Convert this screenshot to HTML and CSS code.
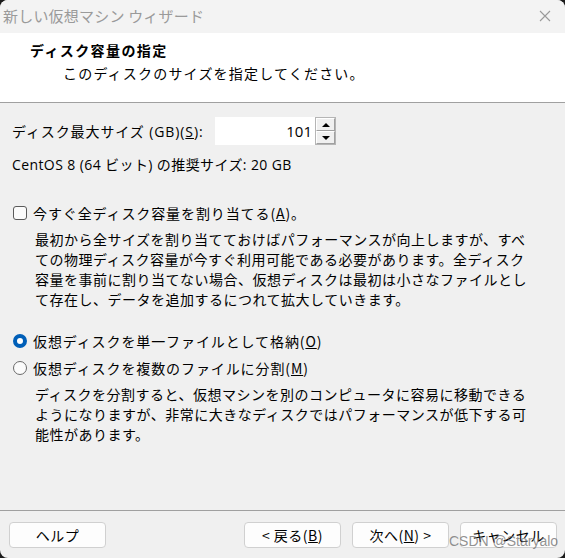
FILE: index.html
```html
<!DOCTYPE html>
<html lang="ja">
<head>
  <meta charset="UTF-8" />
  <title>新しい仮想マシン ウィザード</title>
  <link rel="stylesheet" href="styles.css">
</head>
<body>
  <div class="window">
    <div class="titlebar">
      <span class="title">新しい仮想マシン ウィザード</span>
      <svg class="close" width="12" height="12" viewBox="0 0 12 12">
        <path d="M1 1 L11 11 M11 1 L1 11" stroke="#9a9a9a" stroke-width="1.1" fill="none"/>
      </svg>
    </div>

    <div class="header">
      <h2>ディスク容量の指定</h2>
      <p>このディスクのサイズを指定してください。</p>
    </div>

    <div class="content">
      <div class="size-row">
        <label for="size">ディスク最大サイズ (GB)(<u>S</u>):</label>
        <div class="spin">
          <input type="text" id="size" value="101">
          <div class="spin-btns">
            <span class="up"></span>
            <span class="down"></span>
          </div>
        </div>
      </div>
      <div class="recommend">CentOS 8 (64 ビット) の推奨サイズ: 20 GB</div>

      <div class="option check-opt">
        <span class="checkbox"></span>
        <span>今すぐ全ディスク容量を割り当てる(<u>A</u>)。</span>
      </div>
      <p class="desc">最初から全サイズを割り当てておけばパフォーマンスが向上しますが、すべ<br>ての物理ディスク容量が今すぐ利用可能である必要があります。全ディスク<br>容量を事前に割り当てない場合、仮想ディスクは最初は小さなファイルとし<br>て存在し、データを追加するにつれて拡大していきます。</p>

      <div class="option radio-first">
        <span class="radio checked"></span>
        <span>仮想ディスクを単一ファイルとして格納(<u>O</u>)</span>
      </div>
      <div class="option radio-second">
        <span class="radio"></span>
        <span>仮想ディスクを複数のファイルに分割(<u>M</u>)</span>
      </div>
      <p class="desc">ディスクを分割すると、仮想マシンを別のコンピュータに容易に移動できる<br>ようになりますが、非常に大きなディスクではパフォーマンスが低下する可<br>能性があります。</p>
    </div>

    <div class="footer">
      <button>ヘルプ</button>
      <div class="nav">
        <button>&lt; 戻る(<u>B</u>)</button>
        <button>次へ(<u>N</u>) &gt;</button>
        <button>キャンセル</button>
      </div>
      <span class="watermark">CSDN @Staryalo</span>
    </div>
  </div>
</body>
</html>
```

FILE: styles.css
```css
html {
  background: #1c1c1c;
}
body {
  margin: 0;
  font-family: "Open Sans", "Noto Sans CJK JP", sans-serif;
  font-size: 14px;
  letter-spacing: 0.4px;
  color: #000;
}
.window {
  width: 565px;
  height: 558px;
  background: #f0f0f0;
  border-radius: 8px;
  overflow: hidden;
  display: flex;
  flex-direction: column;
}
.titlebar {
  height: 33px;
  background: #f3f3f3;
  display: flex;
  align-items: center;
  justify-content: space-between;
  padding: 0 14px 0 3px;
}
.title {
  font-family: "Noto Sans CJK JP", sans-serif;
  font-size: 15px;
  letter-spacing: 0.2px;
  color: #9a9a9a;
  line-height: 20px;
  margin-top: -2px;
}
.close {
  margin-top: -2px;
}
.header {
  background: #fff;
  height: 70px;
  box-sizing: border-box;
  padding: 7px 0 0 30px;
  border-bottom: 1px solid #a0a0a0;
  font-family: "Noto Sans CJK JP", sans-serif;
}
.header h2 {
  margin: 0;
  font-size: 14px;
  line-height: 20px;
  font-weight: bold;
  letter-spacing: 1.4px;
}
.header p {
  margin: 3px 0 0 33px;
  font-size: 14px;
  line-height: 20px;
  letter-spacing: 1.2px;
}
.content {
  flex: 1;
  padding: 14px 0 0 12px;
}
.size-row {
  display: flex;
  align-items: center;
  gap: 6px;
  height: 28px;
}
.size-row label {
  width: 197px;
  white-space: nowrap;
  letter-spacing: 0.9px;
}
.spin {
  display: flex;
  height: 28px;
}
.spin input {
  width: 100px;
  height: 28px;
  box-sizing: border-box;
  border: none;
  background: #fff;
  text-align: right;
  padding: 0 3px 0 0;
  font-family: "Open Sans", sans-serif;
  font-size: 15px;
  color: #000;
}
.spin-btns {
  display: flex;
  flex-direction: column;
  width: 19px;
  border: 1px solid #b5b5b5;
  background: #fff;
}
.spin-btns span {
  flex: 1;
  position: relative;
  background: #f0f0f0;
  border: 1px solid #fff;
  border-right-color: #a0a0a0;
  border-bottom-color: #a0a0a0;
}
.spin-btns span::after {
  content: "";
  position: absolute;
  left: 5px;
  top: 4px;
  border-left: 4px solid transparent;
  border-right: 4px solid transparent;
}
.spin-btns .up::after {
  border-bottom: 4px solid #000;
}
.spin-btns .down::after {
  border-top: 4px solid #000;
}
.recommend {
  margin-top: 10px;
  line-height: 20px;
}
.option {
  display: flex;
  align-items: center;
  gap: 6px;
  line-height: 20px;
  font-family: "Noto Sans CJK JP", sans-serif;
  letter-spacing: 0.9px;
}
.check-opt {
  margin-top: 28px;
}
.checkbox {
  width: 12px;
  height: 12px;
  border: 1px solid #5a5a5a;
  border-radius: 3px;
  background: #fbfbfb;
  margin-left: 1px;
}
.radio {
  width: 12px;
  height: 12px;
  border: 1px solid #6a6a6a;
  border-radius: 50%;
  background: #fbfbfb;
  margin-left: 1px;
}
.radio.checked {
  width: 6px;
  height: 6px;
  border: 4px solid #005fb8;
  background: #fff;
}
.desc {
  margin: 6px 0 0 23px;
  line-height: 20px;
  white-space: nowrap;
  font-family: "Noto Sans CJK JP", sans-serif;
  letter-spacing: 0.5px;
}
.radio-first {
  margin-top: 22px;
}
.radio-second {
  margin-top: 7px;
}
.footer {
  position: relative;
  height: 48px;
  box-sizing: border-box;
  border-top: 1px solid #a0a0a0;
  padding: 11px 8px 0 9px;
  display: flex;
  justify-content: space-between;
  align-items: flex-start;
}
.nav {
  display: flex;
  gap: 11px;
}
button {
  width: 97px;
  height: 26px;
  background: #fdfdfd;
  border: 1px solid #d0d0d0;
  border-radius: 4px;
  font-family: "Noto Sans CJK JP", sans-serif;
  font-size: 14px;
  letter-spacing: 0.5px;
  color: #000;
  padding: 0;
}
.watermark {
  position: absolute;
  left: 449px;
  top: 22px;
  font-family: "Liberation Sans", sans-serif;
  font-size: 14px;
  letter-spacing: 0;
  color: rgba(110, 110, 110, 0.75);
}
```
